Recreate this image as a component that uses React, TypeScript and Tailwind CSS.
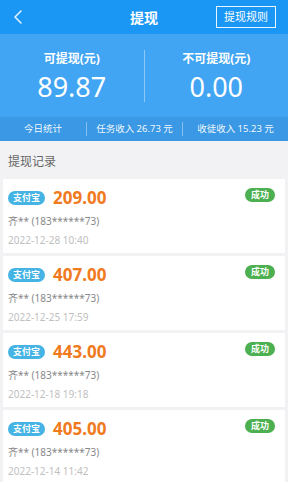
import { ChevronLeft } from 'lucide-react'

const records = [
  { amount: '209.00', time: '2022-12-28 10:40' },
  { amount: '407.00', time: '2022-12-25 17:59' },
  { amount: '443.00', time: '2022-12-18 19:18' },
  { amount: '405.00', time: '2022-12-14 11:42' },
]

export default function App() {
  return (
    <div
      className="w-[288px] h-[482px] overflow-hidden bg-[#f2f2f4]"
      style={{ fontFamily: '"Noto Sans", "Noto Sans CJK SC", sans-serif' }}
    >
      {/* top bar */}
      <div className="h-[34px] bg-[#1a96f4] flex items-center justify-between pl-[6px] pr-2 relative">
        <ChevronLeft className="w-6 h-6 text-white/90" strokeWidth={1.5} />
        <div className="absolute left-1/2 -translate-x-1/2 text-white font-bold text-[14px]">提现</div>
        <div className="border border-white/90 text-white text-[11px] px-[7px] h-[22px] flex items-center mr-[4px]">
          提现规则
        </div>
      </div>

      {/* balances */}
      <div className="bg-[#42a5f3] text-white">
        <div className="flex h-[83px] items-center">
          <div className="flex-1 flex flex-col items-center pt-[2px]">
            <div className="text-[12px] font-bold leading-[16px]">可提现(元)</div>
            <div className="text-[27px] leading-[30px] mt-[5px]">89.87</div>
          </div>
          <div className="w-px h-[52px] bg-white/40" />
          <div className="flex-1 flex flex-col items-center pt-[2px]">
            <div className="text-[12px] font-bold leading-[16px]">不可提现(元)</div>
            <div className="text-[27px] leading-[30px] mt-[5px]">0.00</div>
          </div>
        </div>
        <div className="h-[24px] bg-[#3a98e4] flex items-center text-[9.5px] text-white/95">
          <div className="w-[86px] text-center">今日统计</div>
          <div className="w-px h-[14px] bg-white/40" />
          <div className="w-[95px] text-center">任务收入 26.73 元</div>
          <div className="w-px h-[14px] bg-white/40" />
          <div className="flex-1 text-center">收徒收入 15.23 元</div>
        </div>
      </div>

      <div className="h-[38px] flex items-center px-2 pt-[4px] text-[12px] text-[#666]">提现记录</div>

      <div className="flex flex-col gap-[3px] px-[3px]">
        {records.map((r, i) => (
          <div key={i} className="bg-white h-[74px] px-[5px] pt-[8px]">
            <div className="flex items-center justify-between">
              <div className="flex items-center gap-[8px]">
                <span className="bg-[#45b3e3] text-white text-[9px] font-bold rounded-full px-[5px] h-[14px] leading-[14px]">
                  支付宝
                </span>
                <span className="text-[#f07a1e] font-bold text-[17px] leading-[22px]">{r.amount}</span>
              </div>
              <span className="bg-[#4caf50] text-white text-[9px] font-bold rounded-full px-[6px] h-[14px] leading-[14px] mr-[5px] -mt-[6px]">
                成功
              </span>
            </div>
            <div className="text-[10px] text-[#888] mt-[4px] leading-[16px]">齐** (183******73)</div>
            <div className="text-[10px] text-[#c0c0c0] mt-[3px] leading-[16px]">{r.time}</div>
          </div>
        ))}
      </div>
    </div>
  )
}
